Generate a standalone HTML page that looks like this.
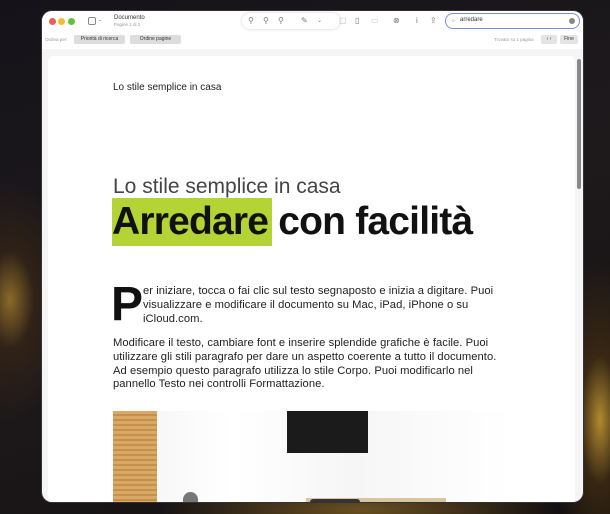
<!DOCTYPE html>
<html><head><meta charset="utf-8"><style>
*{margin:0;padding:0;box-sizing:border-box}
body{width:610px;height:514px;overflow:hidden;position:relative;font-family:"Liberation Sans",sans-serif;
background:radial-gradient(ellipse 60px 120px at 10px 300px,#8a6a2a 0%,rgba(60,40,20,.6) 40%,transparent 100%),
radial-gradient(ellipse 50px 160px at 600px 420px,#b08a30 0%,rgba(90,60,20,.5) 40%,transparent 100%),
radial-gradient(ellipse 200px 40px at 360px 510px,#6a5020 0%,transparent 100%),
linear-gradient(160deg,#15131a,#1e1a1c 50%,#120f10);}
.win{position:absolute;left:42px;top:11px;width:541px;height:491px;border-radius:10px;background:#f5f5f5;overflow:hidden;box-shadow:0 0 0 1px #333}
.abs{position:absolute}
.dot{position:absolute;top:7px;width:7px;height:7px;border-radius:50%}
.t{font-size:5px;color:#666;position:absolute;white-space:nowrap}
.btn{position:absolute;top:24px;height:9px;background:#ddd;border-radius:2px;font-size:5px;color:#333;text-align:center;line-height:9px}
.page{position:absolute;left:6px;top:45px;width:527px;height:460px;background:#fff;border-radius:5px}
.ic{position:absolute;top:5px;font-size:8px;color:#777}
.body{position:absolute;font-size:11.2px;line-height:13.8px;color:#222;white-space:nowrap;letter-spacing:0.05px}
</style></head><body>
<div class="win">
 <div class="abs" style="left:0;top:0;width:541px;height:38px;background:#fff"></div>
 <div class="dot" style="left:7px;background:#ec5f57"></div>
 <div class="dot" style="left:16px;background:#f4bd2f"></div>
 <div class="dot" style="left:26px;background:#5fc43d"></div>
 <div class="abs" style="left:46px;top:6px;width:8px;height:8px;border:1px solid #888;border-radius:2px"></div>
 <div class="t" style="left:56px;top:6px">⌄</div>
 <div class="t" style="left:72px;top:4px;font-size:6px;color:#333">Documento</div>
 <div class="t" style="left:72px;top:11px;font-size:4.5px;color:#999">Pagine 1 di 2</div>
 <div class="abs" style="left:200px;top:2px;width:98px;height:16px;border-radius:8px;background:#fff;box-shadow:0 0 3px #ccc"></div>
 <div class="ic" style="left:206px">⚲</div><div class="ic" style="left:221px">⚲</div><div class="ic" style="left:236px">⚲</div>
 <div class="ic" style="left:259px">✎</div><div class="ic" style="left:275px;font-size:6px;top:6px">⌄</div>
 <div class="ic" style="left:297px;color:#bbb">▢</div><div class="ic" style="left:313px">▯</div><div class="ic" style="left:329px;color:#bbb">▭</div>
 <div class="ic" style="left:351px">⊗</div><div class="ic" style="left:374px">i</div><div class="ic" style="left:388px">⇪</div>
 <div class="abs" style="left:403px;top:2px;width:135px;height:16px;border:1.5px solid #7a8ee0;border-radius:8px;background:#fff"></div>
 <div class="t" style="left:410px;top:7px;color:#999">⌕·</div>
 <div class="t" style="left:418px;top:6px;font-size:6px;color:#333">arredare</div>
 <div class="abs" style="left:527px;top:7px;width:6px;height:6px;border-radius:50%;background:#888"></div>
 <div class="t" style="left:3px;top:26px;font-size:4.5px;color:#999">Ordina per:</div>
 <div class="btn" style="left:32px;width:51px">Priorità di ricerca</div>
 <div class="btn" style="left:88px;width:51px">Ordine pagine</div>
 <div class="t" style="left:452px;top:26px;font-size:4.5px;color:#999">Trovato su 1 pagina</div>
 <div class="btn" style="left:499px;width:16px;background:#e4e4e4">‹ ›</div>
 <div class="btn" style="left:518px;width:18px;background:#e4e4e4">Fine</div>
 <div class="page">
  <div class="abs" style="left:65px;top:26px;font-size:10px;color:#222">Lo stile semplice in casa</div>
  <div class="abs" style="left:65px;top:119px;font-size:21px;color:#444">Lo stile semplice in casa</div>
  <div class="abs" style="left:64px;top:142px;width:160px;height:48px;background:#b4d334"></div>
  <div class="abs" style="left:64px;top:144px;font-size:39px;font-weight:bold;color:#111;letter-spacing:-0.8px;white-space:nowrap">Arredare con facilità</div>
  <div class="abs" style="left:63px;top:226px;font-size:48px;font-weight:bold;color:#111;line-height:46px">P</div>
  <div class="body" style="left:95px;top:229px">er iniziare, tocca o fai clic sul testo segnaposto e inizia a digitare. Puoi<br>visualizzare e modificare il documento su Mac, iPad, iPhone o su<br>iCloud.com.</div>
  <div class="body" style="left:65px;top:281px">Modificare il testo, cambiare font e inserire splendide grafiche è facile. Puoi<br>utilizzare gli stili paragrafo per dare un aspetto coerente a tutto il documento.<br>Ad esempio questo paragrafo utilizza lo stile Corpo. Puoi modificarlo nel<br>pannello Testo nei controlli Formattazione.</div>
  <div class="abs" style="left:65px;top:355px;width:399px;height:100px;background:linear-gradient(90deg,#f3f3f3,#fff 30%,#f6f6f6 60%,#fff)"></div>
  <div class="abs" style="left:65px;top:355px;width:44px;height:100px;background:repeating-linear-gradient(180deg,#d9a865 0 3px,#c4904e 3px 5px)"></div>
  <div class="abs" style="left:239px;top:355px;width:81px;height:42px;background:#1b1b1b"></div>
  <div class="abs" style="left:258px;top:442px;width:140px;height:12px;background:#d8c6a2"></div>
  <div class="abs" style="left:262px;top:443px;width:50px;height:12px;background:#333;border-radius:3px"></div>
  <div class="abs" style="left:135px;top:436px;width:15px;height:14px;background:#777;border-radius:8px 8px 0 0"></div>
 </div>
 <div class="abs" style="left:535px;top:48px;width:4px;height:130px;background:#888;border-radius:2px"></div>
</div>
</body></html>
